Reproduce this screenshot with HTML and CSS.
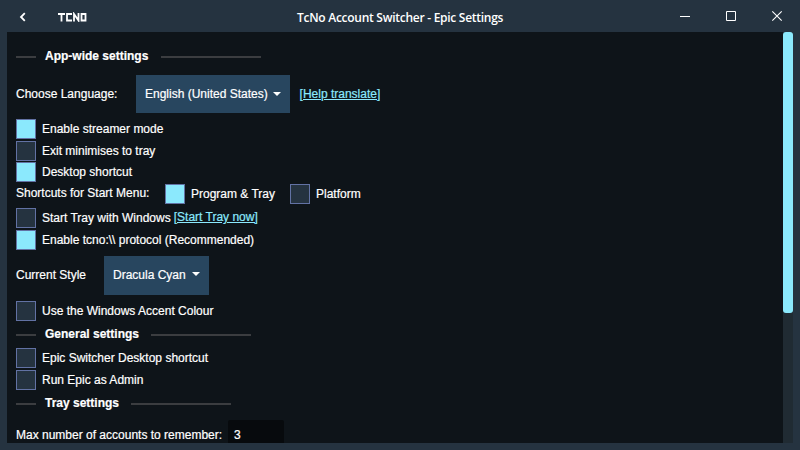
FILE: index.html
```html
<!DOCTYPE html>
<html lang="en">
<head>
<meta charset="utf-8">
<title>TcNo Account Switcher - Epic Settings</title>
<link rel="stylesheet" href="styles.css">
</head>
<body>
<header class="titlebar">
  <svg class="back" width="8" height="10" viewBox="0 0 8 10"><path d="M5.800 1.200 2 5l3.800 3.800"/></svg>
  <svg class="logo" width="30" height="10" viewBox="0 0 30 10"><path d="M0 2h7M3.500 1v8.500M14 2H9v6.500h5M16 9.500V2l4.500 6.500V1M23.500 2h4v6.500h-4z"/></svg>
  <h1 class="title">TcNo Account Switcher - Epic Settings</h1>
  <svg class="controls" width="104" height="12" viewBox="0 0 104 12"><path class="crisp" d="M0 6.500h10M46.500 1.500h9v9h-9z"/><path d="m92.300 1.300 9.400 9.400m0-9.400-9.400 9.400"/></svg>
</header>
<main class="window">
  <div class="content">
    <h2 class="heading first"><span>App-wide settings</span></h2>
    <div class="row language"><span class="label">Choose Language:</span><button class="dropdown">English (United States)</button><a class="help">[Help translate]</a></div>
    <div class="row check streamer"><i class="box on"></i><span>Enable streamer mode</span></div>
    <div class="row check gap2"><i class="box"></i><span>Exit minimises to tray</span></div>
    <div class="row check gap1"><i class="box on"></i><span>Desktop shortcut</span></div>
    <div class="row check gap2"><span class="shortcuts">Shortcuts for Start Menu:</span><i class="box on"></i><span class="program">Program &amp; Tray</span><i class="box"></i><span>Platform</span></div>
    <div class="row check gap4"><i class="box"></i><span>Start Tray with Windows</span><a class="start">[Start Tray now]</a></div>
    <div class="row check gap2"><i class="box on"></i><span>Enable tcno:\\ protocol (Recommended)</span></div>
    <div class="row style"><span class="label">Current Style</span><button class="dropdown">Dracula Cyan</button></div>
    <div class="row check gap6"><i class="box"></i><span>Use the Windows Accent Colour</span></div>
    <h2 class="heading general"><span>General settings</span></h2>
    <div class="row check"><i class="box"></i><span>Epic Switcher Desktop shortcut</span></div>
    <div class="row check gap2"><i class="box"></i><span>Run Epic as Admin</span></div>
    <h2 class="heading tray"><span>Tray settings</span></h2>
    <div class="row remember"><span class="label">Max number of accounts to remember:</span><span class="number">3</span></div>
  </div>
  <div class="scrollbar"><div class="thumb"></div></div>
</main>
</body>
</html>
```

FILE: styles.css
```css
* { box-sizing: border-box; }
body {
  margin: 0;
  width: 800px;
  height: 450px;
  overflow: hidden;
  background: #253340;
  color: #fff;
  font: 12px/20px "Liberation Sans", Arial, sans-serif;
}
svg { fill: none; stroke: #fff; flex: none; }
.titlebar { display: flex; align-items: center; height: 32px; padding: 0 16px 0 19px; }
.back { stroke-width: 1.8; margin-top: 1px; }
.logo { margin: 1px 0 0 31px; stroke-width: 1.8; }
.title {
  flex: 1;
  margin: 4px 0 0 209px;
  font: 600 12px/20px "Open Sans", "Noto Sans", sans-serif;
  letter-spacing: -0.27px;
  white-space: nowrap;
}
.controls { stroke-width: 1.1; }
.crisp { stroke-width: 1; }
.window { display: flex; height: 411px; margin: 0 7px; overflow: hidden; background: #0e1419; -webkit-text-stroke: 0.2px; }
.content { flex: 1; height: 411px; padding-left: 9px; overflow: hidden; }
.scrollbar { width: 10px; height: 411px; background: #202b33; }
.thumb { height: 281px; border-radius: 3px; background: #8be9fd; }
.row { display: flex; align-items: center; white-space: nowrap; }
.check { height: 20px; }
.heading {
  display: flex;
  align-items: center;
  height: 20px;
  margin: 0;
  font-size: 12px;
  line-height: 20px;
}
.heading::before, .heading::after { content: ""; width: 20px; height: 2px; background: #3b3d40; }
.heading::before { margin-right: 9px; }
.heading::after { width: 100px; margin-left: 12px; }
.heading span { margin-top: -2px; white-space: nowrap; }
.first { margin-top: 15px; }
.first::after { margin-left: 13px; }
.language { height: 38px; margin-top: 8px; }
.language .label { width: 120px; }
.dropdown {
  display: flex;
  align-items: center;
  justify-content: space-between;
  width: 154px;
  height: 38px;
  padding: 0 9px;
  border: 0;
  background: #28465f;
  color: #fff;
  font: inherit;
  -webkit-text-stroke: 0.2px;
}
.dropdown::after { content: ""; margin-top: -1px; border: 4px solid transparent; border-top-color: #fff; border-bottom: 0; }
a { color: #8be9fd; text-decoration: underline; }
.help { margin-left: 9.600px; }
.streamer { margin-top: 6px; }
.gap1 { margin-top: 1px; }
.gap2 { margin-top: 2px; }
.gap4 { margin-top: 4px; }
.gap6 { margin-top: 6px; }
.box { width: 20px; height: 20px; margin-right: 6px; border: 1px solid #6272a4; background: #253340; }
.on { background: #8be9fd; }
.shortcuts { width: 149px; margin-top: -2px; }
.program { width: 99px; }
.start { margin: -2px 0 0 3px; }
.style { margin-top: 6px; height: 39px; }
.style .label { width: 88px; margin-top: -2px; }
.style .dropdown { width: 105px; height: 39px; padding-bottom: 2px; }
.general { margin-top: 4px; margin-bottom: 3px; }
.tray { margin-top: 4px; }
.remember { height: 30px; margin-top: 6px; }
.remember .label { width: 212px; }
.number { width: 56px; height: 30px; padding: 0 6px; border-radius: 2px; background: #070a0d; line-height: 30px; }
```
